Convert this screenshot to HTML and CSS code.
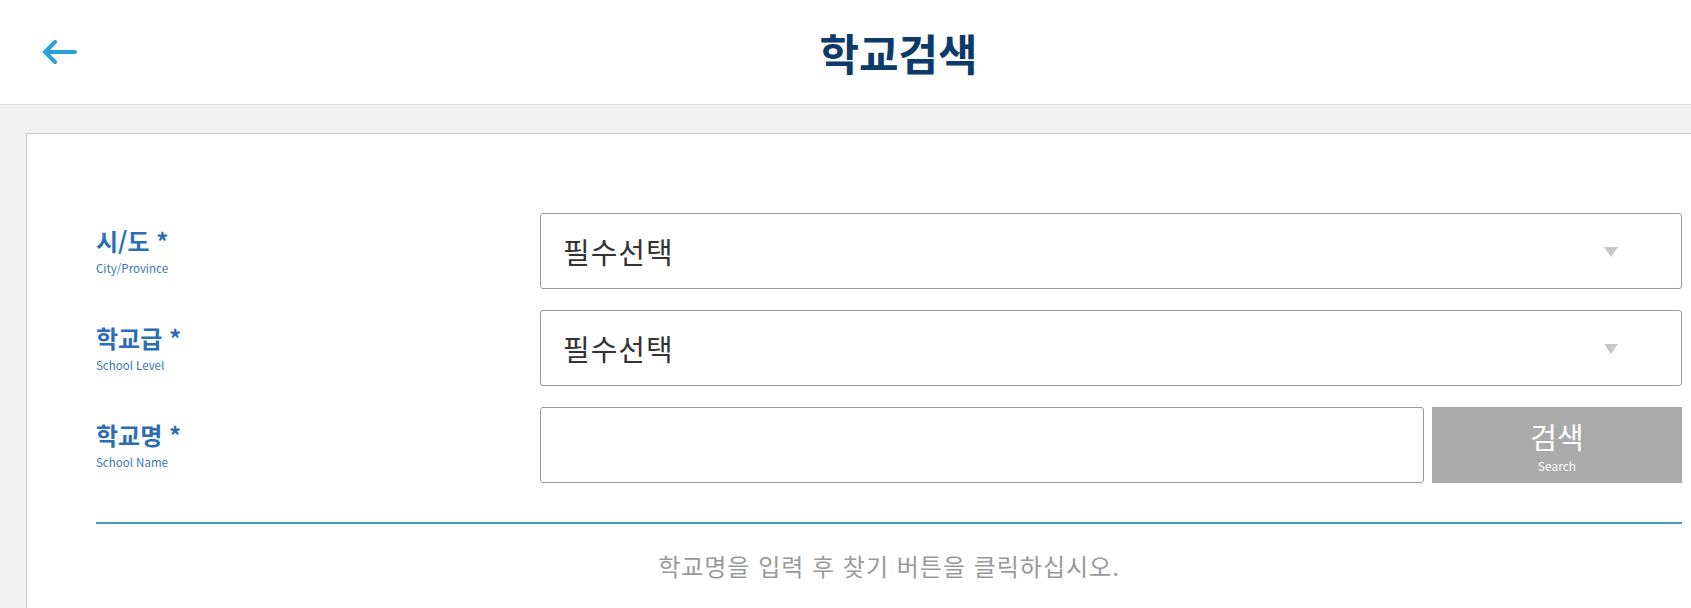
FILE: index.html
```html
<!DOCTYPE html>
<html lang="ko">
<head>
    <meta charset="UTF-8">
    <meta name="viewport" content="width=device-width, initial-scale=1.0">
    <title>학교검색</title>
    <link rel="stylesheet" href="styles.css">
</head>
<body>
    <div class="page">
        <div class="header">
            <a class="back-button" href="#">
                <svg width="36" height="26" viewBox="0 0 36 26">
                    <path d="M3 12 H33 M13 2 L3 12 L13 22" fill="none" stroke="#2aa2d9" stroke-width="4" stroke-linecap="round" stroke-linejoin="round"/>
                </svg>
            </a>
            <h1 class="title">학교검색</h1>
            <span></span>
        </div>

        <div class="content">
            <div class="card">
                <div class="form-row">
                    <div class="label">
                        <span class="label-ko">시/도 *</span>
                        <span class="label-en">City/Province</span>
                    </div>
                    <div class="select-box">
                        <span>필수선택</span>
                        <span class="arrow-down"></span>
                    </div>
                </div>

                <div class="form-row">
                    <div class="label">
                        <span class="label-ko">학교급 *</span>
                        <span class="label-en">School Level</span>
                    </div>
                    <div class="select-box">
                        <span>필수선택</span>
                        <span class="arrow-down"></span>
                    </div>
                </div>

                <div class="form-row">
                    <div class="label">
                        <span class="label-ko">학교명 *</span>
                        <span class="label-en">School Name</span>
                    </div>
                    <div class="search-group">
                        <input type="text" class="text-input">
                        <button class="search-button">
                            <span class="search-ko">검색</span>
                            <span class="search-en">Search</span>
                        </button>
                    </div>
                </div>

                <div class="divider"></div>
                <p class="message">학교명을 입력 후 찾기 버튼을 클릭하십시오.</p>
            </div>
        </div>
    </div>
</body>
</html>
```

FILE: styles.css
```css
html, body {
    overflow: hidden;
}
body {
    margin: 0;
    background-color: #f2f2f2;
    font-family: "Noto Sans CJK KR", "Noto Sans", sans-serif;
}
.page {
    width: 1797px;
}
.header {
    display: grid;
    grid-template-columns: 1fr auto 1fr;
    align-items: center;
    height: 104px;
    background-color: #fff;
    border-bottom: 1px solid #dedede;
}
.back-button {
    display: flex;
    margin-left: 42px;
    margin-top: 2px;
}
.title {
    margin: 0;
    font-size: 43px;
    font-weight: 700;
    color: #0c3a6a;
}
.content {
    padding: 28px 0 0 26px;
}
.card {
    width: 1586px;
    padding: 79px 88px 120px 69px;
    background-color: #fff;
    border: 1px solid #cccccc;
}
.form-row {
    display: flex;
    align-items: center;
    margin-bottom: 21px;
}
.label {
    display: flex;
    flex-direction: column;
    width: 444px;
    color: #2d6db4;
}
.label-ko {
    font-size: 24px;
    font-weight: 700;
    line-height: 30px;
}
.label-en {
    margin-top: 3px;
    font-size: 11.5px;
    line-height: 18px;
    color: #3a74b9;
}
.select-box {
    display: flex;
    align-items: center;
    justify-content: space-between;
    box-sizing: border-box;
    width: 1142px;
    height: 76px;
    padding: 0 63px 0 22px;
    border: 1px solid #999;
    border-radius: 3px;
    font-size: 29px;
    letter-spacing: 1px;
    color: #333;
}
.arrow-down {
    width: 0;
    height: 0;
    margin-top: 2px;
    border-left: 7.5px solid transparent;
    border-right: 7.5px solid transparent;
    border-top: 10px solid #c8c8c8;
}
.search-group {
    display: flex;
    gap: 8px;
}
.text-input {
    box-sizing: border-box;
    width: 884px;
    height: 76px;
    margin: 0;
    border: 1px solid #999;
    border-radius: 3px;
}
.search-button {
    display: flex;
    flex-direction: column;
    align-items: center;
    justify-content: center;
    width: 250px;
    height: 76px;
    border: none;
    background-color: #aaaaaa;
    color: #fff;
    font-family: inherit;
    cursor: pointer;
}
.search-ko {
    font-size: 29px;
    line-height: 42px;
}
.search-en {
    font-size: 12px;
    line-height: 18px;
}
.divider {
    height: 2px;
    margin-top: 39px;
    background-color: #3b9bd1;
}
.message {
    margin: 24px 0 0;
    text-align: center;
    font-size: 24px;
    letter-spacing: 1px;
    color: #999;
}
```
